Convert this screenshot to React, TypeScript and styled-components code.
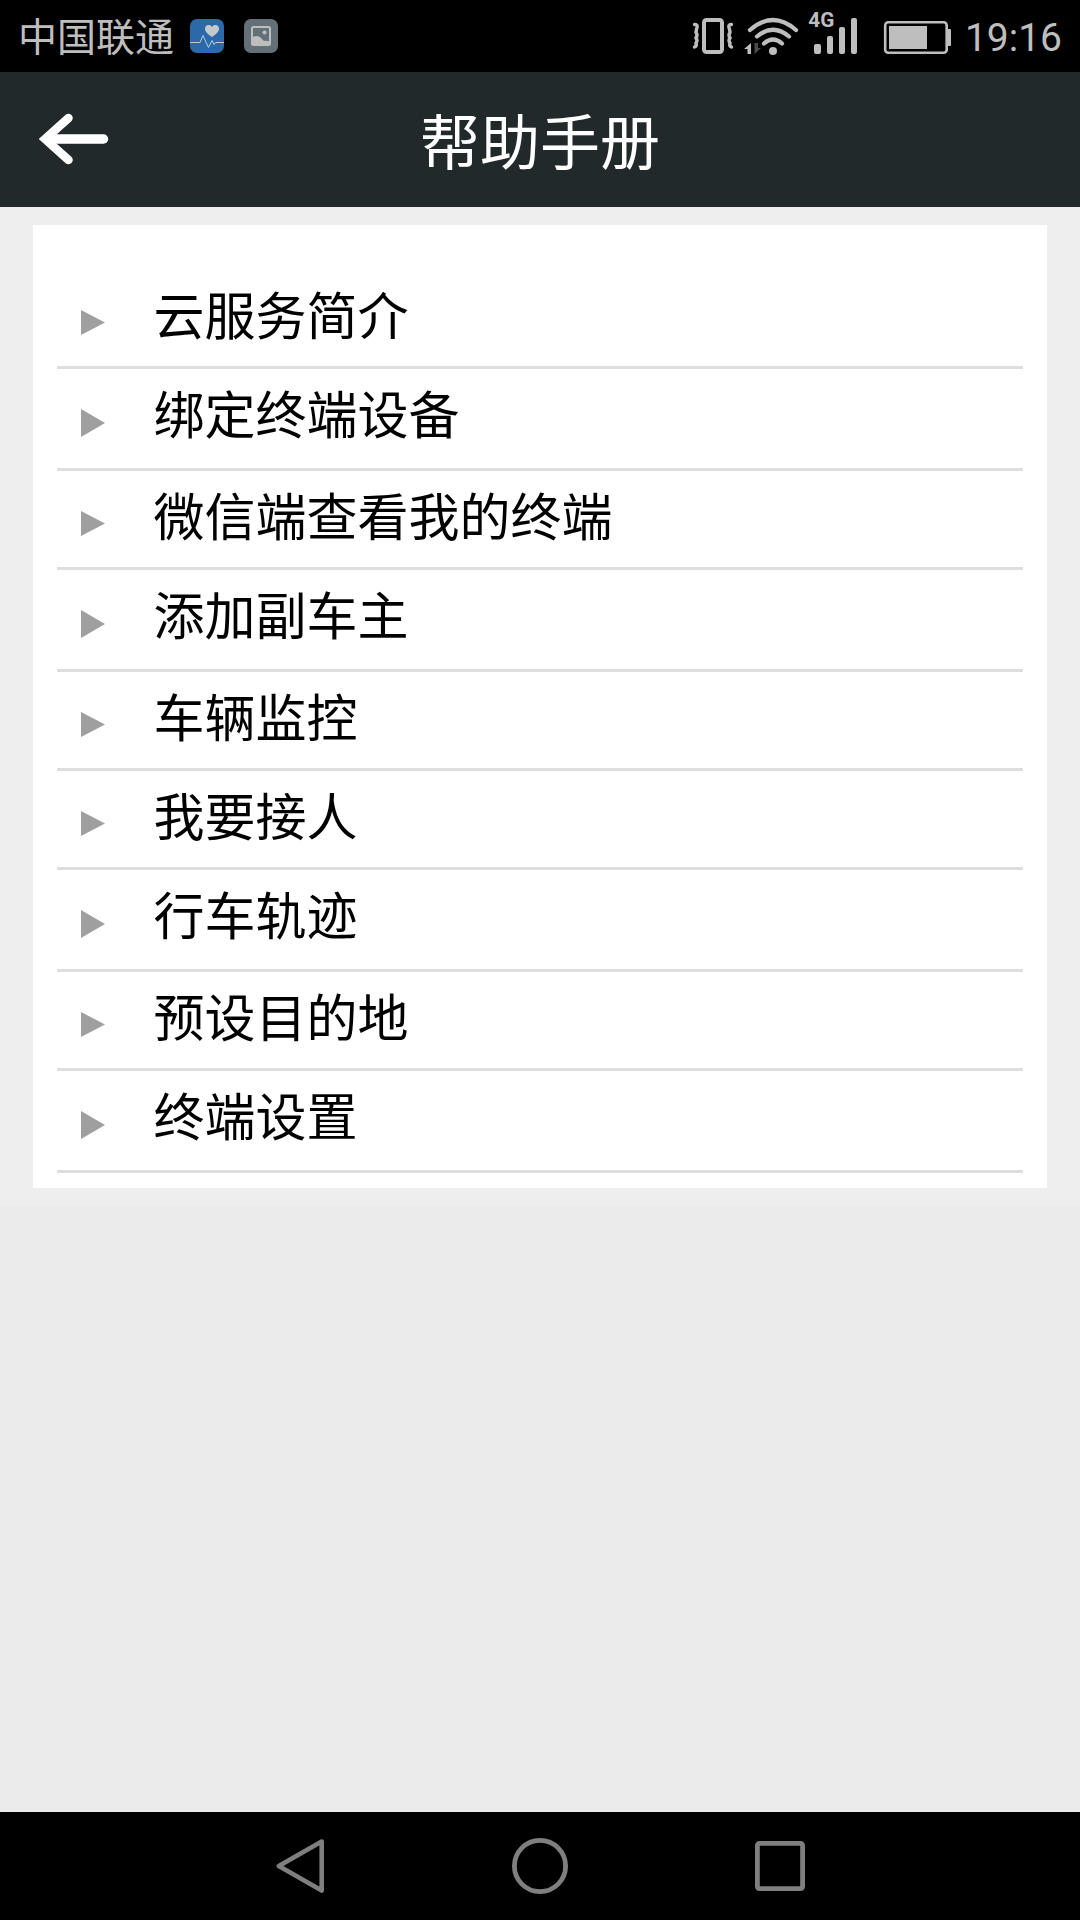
import React from 'react';
import styled, { createGlobalStyle } from 'styled-components';

const GlobalStyle = createGlobalStyle`
  * { box-sizing: border-box; }
  body { margin: 0; background: #ebebeb; font-family: Roboto, "Noto Sans CJK SC", sans-serif; }
`;

const Screen = styled.div`
  width: 1080px;
  height: 1920px;
  display: flex;
  flex-direction: column;
  overflow: hidden;
  background: #ebebeb;
`;

const StatusBar = styled.div`
  height: 72px;
  flex: none;
  display: flex;
  align-items: center;
  padding: 0 18px 0 18px;
  background: #000;
  color: #bebebe;
`;

const Carrier = styled.span`
  width: 156px;
  font-size: 39px;
  line-height: 68px;
  height: 72px;
  white-space: nowrap;
  font-family: "Noto Sans CJK SC", sans-serif;
  margin-right: 16px;
`;

const NotificationIcons = styled.svg`
  display: block;
  flex: none;
`;

const SystemIcons = styled.svg`
  display: block;
  flex: none;
  margin-left: 412px;
`;

const Clock = styled.span`
  margin-left: auto;
  font-size: 39px;
  line-height: 72px;
  padding-top: 4px;
`;

const Header = styled.header`
  height: 135px;
  flex: none;
  display: grid;
  grid-template-columns: 140px 1fr 140px;
  background: #22292b;
`;

const BackButton = styled.button`
  border: 0;
  padding: 0 0 1px 39px;
  background: none;
  display: flex;
  align-items: center;
`;

const Title = styled.h1`
  margin: 0;
  color: #fff;
  font-size: 60px;
  font-weight: 400;
  height: 135px;
  line-height: 133px;
  text-align: center;
  font-family: "Noto Sans CJK SC", sans-serif;
`;

const Content = styled.main`
  flex: none;
  padding: 18px 33px 18px;
  background: #eee;
`;

const Card = styled.ul`
  margin: 0;
  padding: 45px 24px 15px;
  list-style: none;
  background: #fff;
`;

const Row = styled.li<{ $h: number }>`
  height: ${(p) => p.$h}px;
  border-bottom: 3px solid #dedede;
  display: flex;
  align-items: flex-start;
  padding-left: 24px;
`;

const Marker = styled.svg`
  display: block;
  flex: none;
  margin: 40px 48.5px 0 0;
`;

const Label = styled.span`
  font-size: 51px;
  line-height: 74px;
  padding-top: 6px;
  color: #000;
  font-family: "Noto Sans CJK SC", sans-serif;
`;

const NavBar = styled.nav`
  margin-top: auto;
  height: 108px;
  flex: none;
  display: grid;
  grid-template-columns: 1fr 240px 240px 240px 1fr;
  place-items: center;
  background: #000;
`;

const NavButton = styled.button<{ $col: number }>`
  grid-column: ${(p) => p.$col};
  border: 0;
  padding: 0;
  background: none;
  display: flex;
`;

const topics = [
  { text: '云服务简介', h: 99 },
  { text: '绑定终端设备', h: 102 },
  { text: '微信端查看我的终端', h: 99 },
  { text: '添加副车主', h: 102 },
  { text: '车辆监控', h: 99 },
  { text: '我要接人', h: 99 },
  { text: '行车轨迹', h: 102 },
  { text: '预设目的地', h: 99 },
  { text: '终端设置', h: 102 },
];

export default function App() {
  return (
    <Screen>
      <GlobalStyle />
      <StatusBar>
        <Carrier>中国联通</Carrier>
        <NotificationIcons width="88" height="34" viewBox="0 0 88 34">
          <rect width="34" height="34" rx="7" fill="#2b69a8" />
          <path d="M22 18c-4-3-7-5-7-8.500a3.700 3.700 0 0 1 7-1.500a3.700 3.700 0 0 1 7 1.500c0 3.500-3 5.500-7 8.500z" fill="#c6c9cc" />
          <path d="M0 23.500h10l3-7 5.500 12 3.500-7 2 4 1.500-2H34" fill="none" stroke="#b4cde4" strokeWidth="1" />
          <rect x="54" width="34" height="34" rx="7" fill="#647078" />
          <rect x="62" y="8" width="18" height="18" rx="1.500" fill="none" stroke="#bebebe" strokeWidth="2" />
          <path d="M62 19q4.500-4 9 0l3 3q3-1 6 1v3H62z" fill="#bebebe" />
          <circle cx="74.500" cy="13.500" r="2" fill="#bebebe" />
        </NotificationIcons>
        <SystemIcons width="261" height="72" viewBox="690 0 261 72">
          <rect x="704" y="20" width="18" height="32" rx="2.500" fill="none" stroke="#bebebe" strokeWidth="4" />
          <path d="M694.500 24.500q3.500 0 2.500 3t-1 5q2 2.500 0 5.500q2 2.500 0 5q1 3-1.500 4M731.500 24.500q-3.500 0-2.500 3t1 5q-2 2.500 0 5.500q-2 2.500 0 5q-1 3 1.500 4" fill="none" stroke="#bebebe" strokeWidth="3.400" strokeLinecap="round" />
          <g fill="none" stroke="#bebebe" strokeWidth="4.200" strokeLinecap="round">
            <path d="M750 30Q773 10 796 30" />
            <path d="M757 36.500Q773 23 789 36.500" />
            <path d="M764 43.500Q773 35.500 782 43.500" />
          </g>
          <circle cx="773" cy="51" r="4" fill="#bebebe" />
          <path d="M751 43v11h-3.500v-5H744z" fill="#bebebe" />
          <path d="M754.500 43v11l6.500-6h-3v-5z" fill="#4a4a4a" />
          <text x="808.300" y="27" fontSize="20.500" fontWeight="700" fontFamily="Roboto, sans-serif" fill="#bebebe" textLength="26" lengthAdjust="spacingAndGlyphs">4G</text>
          <rect x="814" y="44" width="7" height="10" rx="2" fill="#bebebe" />
          <rect x="827" y="36" width="6" height="18" rx="2" fill="#bebebe" />
          <rect x="839" y="27" width="6" height="27" rx="2" fill="#bebebe" />
          <rect x="851" y="18" width="6" height="36" rx="2" fill="#bebebe" />
          <rect x="885.200" y="22.200" width="61.500" height="30.500" rx="3" fill="none" stroke="#bebebe" strokeWidth="2.600" />
          <rect x="889" y="26" width="38" height="23" fill="#bebebe" />
          <rect x="947" y="29" width="4" height="17" rx="1" fill="#bebebe" />
        </SystemIcons>
        <Clock>19:16</Clock>
      </StatusBar>
      <Header>
        <BackButton aria-label="返回">
          <svg width="72" height="54" viewBox="0 0 72 54">
            <path d="M29.500 6L6 27l23.500 21" fill="none" stroke="#fff" strokeWidth="8.500" strokeLinecap="round" />
            <path d="M8 27h56.500" fill="none" stroke="#fff" strokeWidth="9.500" strokeLinecap="round" />
          </svg>
        </BackButton>
        <Title>帮助手册</Title>
      </Header>
      <Content>
        <Card>
          {topics.map((t) => (
            <Row key={t.text} $h={t.h}>
              <Marker width="24" height={t.h - 74} viewBox="0 0 24 28" preserveAspectRatio="none">
                <path d="M0 0L24 14L0 28Z" fill="#9f9f9f" />
              </Marker>
              <Label>{t.text}</Label>
            </Row>
          ))}
        </Card>
      </Content>
      <NavBar>
        <NavButton $col={2} aria-label="back">
          <svg width="56" height="64" viewBox="0 0 56 64">
            <path d="M49.700 7.500L6.800 32l42.900 24.500z" fill="none" stroke="#7f7f7f" strokeWidth="4.600" strokeLinejoin="round" />
          </svg>
        </NavButton>
        <NavButton $col={3} aria-label="home">
          <svg width="60" height="60" viewBox="0 0 60 60">
            <circle cx="30" cy="30" r="25.600" fill="none" stroke="#7f7f7f" strokeWidth="4.800" />
          </svg>
        </NavButton>
        <NavButton $col={4} aria-label="recent">
          <svg width="52" height="52" viewBox="0 0 52 52">
            <rect x="3.400" y="3.400" width="45.200" height="45.200" rx="2" fill="none" stroke="#7f7f7f" strokeWidth="4.800" />
          </svg>
        </NavButton>
      </NavBar>
    </Screen>
  );
}
